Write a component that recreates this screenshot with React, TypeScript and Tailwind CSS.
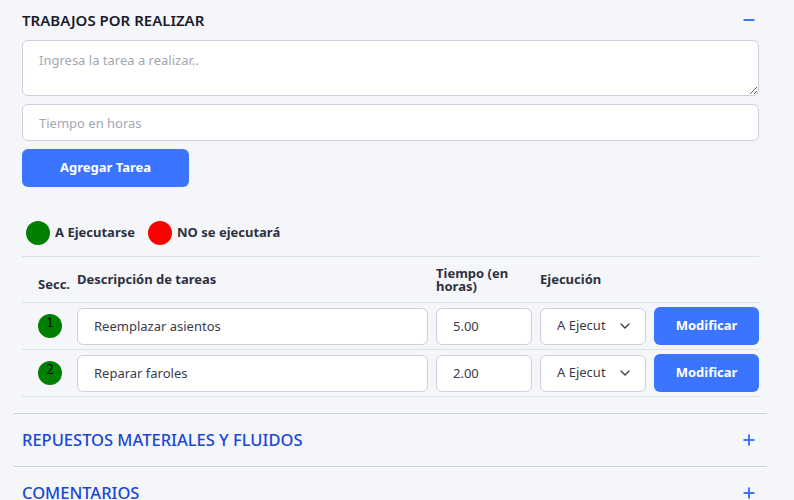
import { ChevronDown, Minus, Plus } from "lucide-react";

const tasks = [
  { id: 1, desc: "Reemplazar asientos", hours: "5.00" },
  { id: 2, desc: "Reparar faroles", hours: "2.00" },
];

export default function App() {
  return (
    <div
      className="min-h-screen bg-[#f5f6fa] pl-[14px] pr-[27px] text-[#2b2b3a]"
      style={{ fontFamily: '"Noto Sans", Lato, sans-serif' }}
    >
      <section className="px-2">
        <div className="flex items-center justify-between h-[40px]">
          <h2 className="text-[15px] font-semibold text-[#1b1b2b]">TRABAJOS POR REALIZAR</h2>
          <Minus className="w-4 h-4 mr-[2px] text-[#3b75ff]" strokeWidth={3} />
        </div>

        <textarea
          placeholder="Ingresa la tarea a realizar.."
          className="block w-full h-[56px] rounded-md border border-[#cdd1dd] bg-white px-4 py-2.5 text-[13px] placeholder:text-[#a3a7b5] outline-none"
        />
        <input
          placeholder="Tiempo en horas"
          className="block w-full h-[37px] mt-2 rounded-md border border-[#cdd1dd] bg-white px-4 text-[13px] placeholder:text-[#a3a7b5] outline-none"
        />
        <button className="mt-2 h-[38px] w-[167px] rounded-md bg-[#3b75ff] text-white text-[13px] font-bold">
          Agregar Tarea
        </button>

        <div className="flex items-center gap-[5px] mt-[34px] h-6 px-1 text-[13px] font-bold text-[#2f3040]">
          <span className="w-6 h-6 rounded-full bg-[#008000]" />
          <span className="mr-[8px]">A Ejecutarse</span>
          <span className="w-6 h-6 rounded-full bg-[#ff0000]" />
          <span>NO se ejecutará</span>
        </div>

        <div className="mt-[11px] border-t border-[#dcdfe8]">
          <div className="flex items-center gap-2 h-[46px] border-b border-[#dcdfe8] text-[13px] font-bold text-[#2f3040] leading-[13px]">
            <div className="w-[47px] shrink-0 pl-4 self-end pb-[11px]">Secc.</div>
            <div className="flex-1 min-w-0">Descripción de tareas</div>
            <div className="w-[96px]">Tiempo (en<br />horas)</div>
            <div className="w-[106px]">Ejecución</div>
            <div className="w-[105px]" />
          </div>
          {tasks.map((t) => (
            <div key={t.id} className="flex items-center gap-2 h-[47px] border-b border-[#dcdfe8]">
              <div className="w-[47px] pl-4 shrink-0">
                <span
                  className="flex justify-center w-6 h-6 rounded-full bg-[#008000] text-black text-[12px] leading-[18px]"
                  style={{ fontFamily: '"DejaVu Serif", serif' }}
                >
                  {t.id}
                </span>
              </div>
              <input
                defaultValue={t.desc}
                className="flex-1 min-w-0 h-[37px] rounded-md border border-[#cdd1dd] bg-white px-4 text-[13px] text-[#3a3b4a] outline-none"
              />
              <input
                defaultValue={t.hours}
                className="w-[96px] h-[37px] rounded-md border border-[#cdd1dd] bg-white px-4 text-[13px] text-[#3a3b4a] outline-none"
              />
              <div className="w-[106px] h-[37px] flex items-center justify-between rounded-md border border-[#cdd1dd] bg-white pl-4 pr-3 text-[13px] text-[#3a3b4a]">
                <span>A Ejecut</span>
                <ChevronDown className="w-4 h-4 text-[#3a3b4a]" strokeWidth={2} />
              </div>
              <button className="w-[105px] h-[38px] rounded-md bg-[#3b75ff] text-white text-[13px] font-bold">
                Modificar
              </button>
            </div>
          ))}
        </div>
      </section>

      <div className="mt-4 border-t border-[#cdd1dd]">
        <div className="flex items-center justify-between h-[52px] px-2">
          <h2 className="text-[16.5px] font-medium text-[#1a47d6]">REPUESTOS MATERIALES Y FLUIDOS</h2>
          <Plus className="w-4 h-4 mr-[2px] text-[#3b75ff]" strokeWidth={3} />
        </div>
      </div>
      <div className="border-t border-[#cdd1dd]">
        <div className="flex items-center justify-between h-[52px] px-2">
          <h2 className="text-[16.5px] font-medium text-[#1a47d6]">COMENTARIOS</h2>
          <Plus className="w-4 h-4 mr-[2px] text-[#3b75ff]" strokeWidth={3} />
        </div>
      </div>
    </div>
  );
}
